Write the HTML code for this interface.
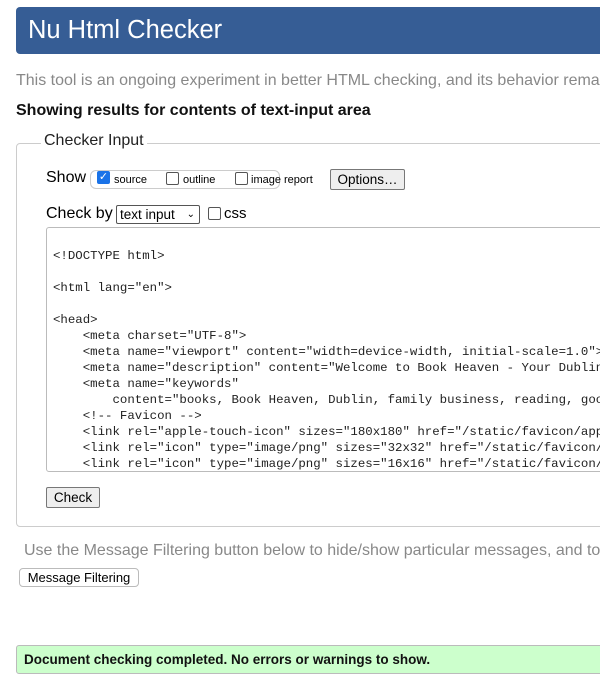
<!DOCTYPE html>
<html><head><style>
html,body{margin:0;width:600px;height:687px;overflow:hidden}
body{background:#fff;font-family:"Liberation Sans",Arial,sans-serif;position:relative;color:#000}
.a{position:absolute;white-space:nowrap}
#hd{left:16px;top:7px;width:584px;height:47px;background:#365d95;border-radius:4px 0 0 4px}
#hd span{position:absolute;left:12px;top:9px;color:#fff;font-size:25.5px}
#fs{left:16px;top:143px;width:590px;height:382px;border:1px solid #ccc;border-radius:4px}
#lg{left:41px;top:132px;background:#fff;padding:0 3px;font-size:16px;color:#222}
.cb{display:inline-block;width:11px;height:11px;border:1px solid #555;border-radius:2px;vertical-align:-1px;background:#fff}
.btn{position:absolute;border:1px solid #777;border-radius:2px;background:#eee;font-size:13.5px;text-align:center;box-sizing:border-box}
#ta{left:46px;top:227px;width:560px;height:245px;border:1px solid #bbb;border-radius:3px;font-family:"Liberation Mono",monospace;font-size:12.4px;line-height:16px;color:#222;box-sizing:border-box;padding:4px 0 0 6px;white-space:pre;overflow:hidden}
.clip{overflow:hidden;width:584px}
</style></head><body>
<div class="a" id="hd"><span>Nu Html Checker</span></div>
<div class="a clip" style="left:16px;top:72px;font-size:16px;color:#888">This tool is an ongoing experiment in better HTML checking, and its behavior remains subject to change</div>
<div class="a" style="left:16px;top:102px;font-size:16px;font-weight:bold;color:#111">Showing results for contents of text-input area</div>
<div class="a" id="fs"></div>
<div class="a" id="lg">Checker Input</div>
<div class="a" style="left:46px;top:169px;font-size:16px">Show</div>
<div class="a" style="left:90px;top:170px;width:188px;height:17px;border:1px solid #ccc;border-radius:6px"></div>
<div class="a" style="left:97px;top:171px;width:13px;height:13px;background:#1a73e8;border-radius:2px;color:#fff;font-size:11px;line-height:13px;text-align:center">✓</div>
<div class="a" style="left:114px;top:174px;font-size:11px">source</div>
<div class="a" style="left:166px;top:171px"><span class="cb"></span></div>
<div class="a" style="left:183px;top:174px;font-size:11px">outline</div>
<div class="a" style="left:235px;top:171px"><span class="cb"></span></div>
<div class="a" style="left:251px;top:174px;font-size:11px">image report</div>
<div class="btn" style="left:330px;top:169px;width:75px;height:21px;line-height:19px">Options…</div>
<div class="a" style="left:46px;top:205px;font-size:16px">Check by</div>
<div class="a" style="left:116px;top:205px;width:84px;height:19px;border:1px solid #555;border-radius:2px;font-size:13.5px;line-height:17px;padding-left:3px;box-sizing:border-box">text input <span style="position:absolute;right:4px;font-size:10px">⌄</span></div>
<div class="a" style="left:208px;top:206px"><span class="cb"></span></div>
<div class="a" style="left:224px;top:205px;font-size:15px">css</div>
<div class="a" id="ta">
&lt;!DOCTYPE html&gt;

&lt;html lang="en"&gt;

&lt;head&gt;
    &lt;meta charset="UTF-8"&gt;
    &lt;meta name="viewport" content="width=device-width, initial-scale=1.0"&gt;
    &lt;meta name="description" content="Welcome to Book Heaven - Your Dublin bookshop"&gt;
    &lt;meta name="keywords"
        content="books, Book Heaven, Dublin, family business, reading, good"&gt;
    &lt;!-- Favicon --&gt;
    &lt;link rel="apple-touch-icon" sizes="180x180" href="/static/favicon/apple"&gt;
    &lt;link rel="icon" type="image/png" sizes="32x32" href="/static/favicon/"&gt;
    &lt;link rel="icon" type="image/png" sizes="16x16" href="/static/favicon/"&gt;</div>
<div class="btn" style="left:46px;top:487px;width:54px;height:21px;line-height:19px">Check</div>
<div class="a clip" style="left:24px;top:542px;font-size:16px;color:#888;width:576px">Use the Message Filtering button below to hide/show particular messages, and to see total counts</div>
<div class="btn" style="left:19px;top:568px;width:120px;height:19px;line-height:17px;border-color:#bbb;border-radius:4px;background:#fff;font-size:13px">Message Filtering</div>
<div class="a" style="left:16px;top:645px;width:590px;height:29px;background:#ccffcc;border:1px solid #bbb;border-radius:3px;box-sizing:border-box"></div>
<div class="a" style="left:24px;top:652px;font-size:13.5px;font-weight:bold;color:#111">Document checking completed. No errors or warnings to show.</div>
</body></html>
